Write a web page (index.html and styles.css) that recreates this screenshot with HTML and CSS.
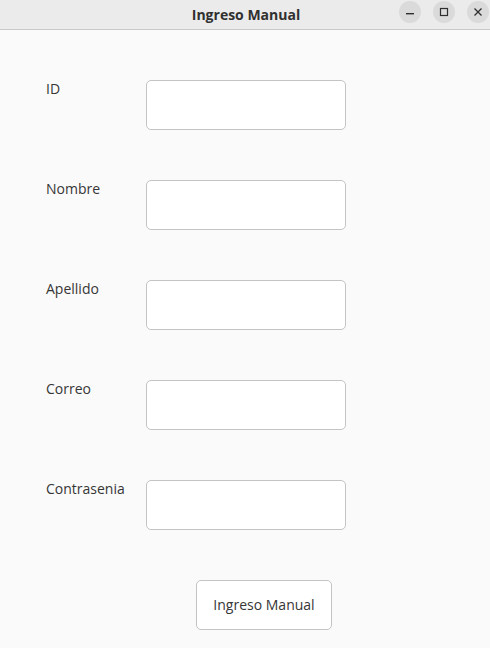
FILE: index.html
```html
<!DOCTYPE html>
<html lang="es">
<head>
<meta charset="utf-8">
<title>Ingreso Manual</title>
<link rel="stylesheet" href="styles.css">
</head>
<body>
<div class="window">
  <header class="titlebar">
    <div class="title">Ingreso Manual</div>
    <div class="controls">
      <span class="ctl">
        <svg width="22" height="22" viewBox="0 0 22 22"><rect x="7" y="12" width="8" height="1.4" fill="#2e2e2e"/></svg>
      </span>
      <span class="ctl">
        <svg width="22" height="22" viewBox="0 0 22 22"><rect x="7.5" y="7.5" width="7" height="7" fill="none" stroke="#2e2e2e" stroke-width="1.2"/></svg>
      </span>
      <span class="ctl">
        <svg width="22" height="22" viewBox="0 0 22 22"><path d="M7.5 7.5 L14.5 14.5 M14.5 7.5 L7.5 14.5" stroke="#2e2e2e" stroke-width="1.3" fill="none"/></svg>
      </span>
    </div>
  </header>
  <main class="form">
    <div class="row"><label class="lbl">ID</label><input class="field" type="text"></div>
    <div class="row"><label class="lbl">Nombre</label><input class="field" type="text"></div>
    <div class="row"><label class="lbl">Apellido</label><input class="field" type="text"></div>
    <div class="row"><label class="lbl">Correo</label><input class="field" type="text"></div>
    <div class="row"><label class="lbl">Contrasenia</label><input class="field" type="password"></div>
    <div class="actions"><button class="btn" type="button">Ingreso Manual</button></div>
  </main>
</div>
</body>
</html>
```
FILE: styles.css
```css
html, body {
  margin: 0;
  padding: 0;
  background: #fafafa;
  font-family: "Open Sans", "DejaVu Sans", sans-serif;
  color: #3a3a3a;
}
.window {
  width: 490px;
  height: 648px;
  overflow: hidden;
  background: #fafafa;
}
.titlebar {
  position: relative;
  height: 29px;
  background: #ebebeb;
  border-bottom: 1px solid #c9c9c9;
  display: flex;
  align-items: center;
  justify-content: center;
}
.title {
  font-weight: 700;
  font-size: 14px;
  color: #303030;
  margin-left: 2px;
}
.controls {
  position: absolute;
  right: 1px;
  top: 1px;
  display: flex;
  gap: 12px;
}
.ctl {
  width: 22px;
  height: 22px;
  border-radius: 50%;
  background: #dadada;
  display: flex;
}
.form {
  padding: 50px 0 0 46px;
  display: flex;
  flex-direction: column;
  gap: 50px;
}
.row {
  display: flex;
  align-items: flex-start;
}
.lbl {
  width: 100px;
  font-size: 14px;
  line-height: 18px;
  color: #363636;
}
.field {
  box-sizing: border-box;
  width: 200px;
  height: 50px;
  margin: 0;
  border: 1px solid #c4c4c4;
  border-radius: 5px;
  background: #ffffff;
  outline: none;
}
.actions {
  display: flex;
  padding-left: 150px;
}
.btn {
  box-sizing: border-box;
  width: 136px;
  height: 50px;
  border: 1px solid #c4c4c4;
  border-radius: 5px;
  background: #ffffff;
  font-family: "Open Sans", "DejaVu Sans", sans-serif;
  font-size: 14px;
  color: #363636;
  padding: 0 0 2px 0;
}
```
